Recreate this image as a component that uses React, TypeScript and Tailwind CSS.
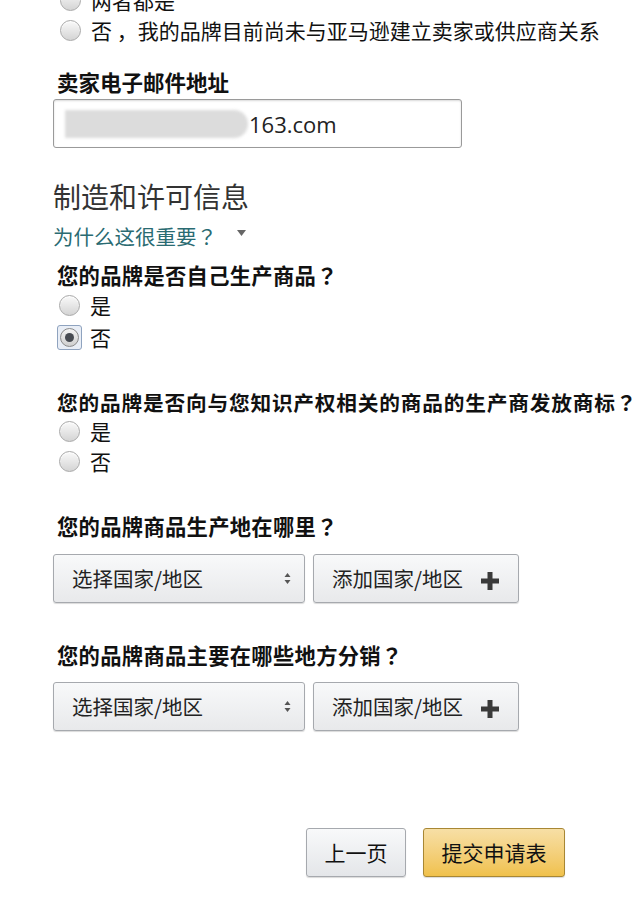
import React from "react";

const cjk = { fontFamily: '"Noto Sans CJK SC", "Noto Sans", sans-serif' };

// full-width question mark centred in its own cell, as in the reference
const Q = () => (
  <span className="inline-block w-[1em] text-center" style={{ fontFamily: '"Noto Sans CJK JP", sans-serif' }}>
    ？
  </span>
);

function Radio({ label, checked = false }: { label: string; checked?: boolean }) {
  return (
    <div className="flex items-center h-full">
      <div className="w-[26px] h-[26px] ml-[1px] flex items-center justify-center">
        {checked ? (
          <div className="w-[25px] h-[25px] rounded-[3px] border border-[#8fa3bf] bg-[#e9eef6] flex items-center justify-center">
            <div className="w-[19px] h-[19px] rounded-full border border-[#8b8b8b] bg-gradient-to-b from-[#f4f4f4] to-[#cfcfcf] flex items-center justify-center">
              <div className="w-[9px] h-[9px] rounded-full bg-[#474b52]" />
            </div>
          </div>
        ) : (
          <div className="w-[21px] h-[21px] rounded-full border border-[#a9a9a9] bg-gradient-to-b from-[#fafafa] to-[#d4d4d4] shadow-[inset_0_1px_1px_rgba(255,255,255,0.9)]" />
        )}
      </div>
      <span className="ml-[8px] text-[21px] leading-none text-[#111] whitespace-nowrap">{label}</span>
    </div>
  );
}

function CountryRow() {
  return (
    <div className="flex h-[49px] gap-[8px]">
      <div className="w-[252px] h-full rounded-[3px] border border-[#a6a9ae] bg-gradient-to-b from-[#f8f9fa] to-[#e8e9eb] shadow-[0_1px_1px_rgba(0,0,0,0.15)] flex items-center pl-[18px] pr-[12px]">
        <span className="text-[20.5px] text-[#222] leading-none">选择国家/地区</span>
        <svg className="ml-auto mr-[1px]" width="7" height="13" viewBox="0 0 7 13">
          <path d="M3.5 1 L6.5 5 L0.5 5 Z" fill="#555" />
          <path d="M3.5 12 L6.5 8 L0.5 8 Z" fill="#555" />
        </svg>
      </div>
      <div className="w-[206px] h-full rounded-[3px] border border-[#a6a9ae] bg-gradient-to-b from-[#f8f9fa] to-[#e8e9eb] shadow-[0_1px_1px_rgba(0,0,0,0.15)] flex items-center pl-[18px]">
        <span className="text-[20.5px] text-[#222] leading-none">添加国家/地区</span>
        <svg className="ml-[18px] mt-[4px]" width="18" height="18" viewBox="0 0 18 18">
          <rect x="6.5" y="0" width="5" height="18" fill="#3a3a3a" />
          <rect x="0" y="6.5" width="18" height="5" fill="#3a3a3a" />
        </svg>
      </div>
    </div>
  );
}

export default function App() {
  return (
    <div className="w-[640px] h-[919px] overflow-hidden bg-white" style={cjk}>
      <div className="flex flex-col pl-[53px]">
        {/* radio rows carried over from the previous question */}
        <div className="h-[30px] mt-[-15px] pl-[3px]">
          <Radio label="两者都是" />
        </div>
        <div className="h-[30px] pl-[3px]">
          <Radio label="否 ，我的品牌目前尚未与亚马逊建立卖家或供应商关系" />
        </div>

        <div className="mt-[22px] h-[30px] pl-[4px] flex items-center text-[21.5px] font-bold text-[#111] leading-none">
          卖家电子邮件地址
        </div>

        {/* email input */}
        <div className="mt-[2px] w-[409px] h-[49px] rounded-[3px] border border-[#9a9a9a] shadow-[inset_0_1px_2px_rgba(0,0,0,0.15)] flex items-center pl-[11px]">
          <div className="w-[183px] h-[28px] rounded-r-[14px] bg-[#dcdcdc] blur-[1.5px]" />
          <span className="ml-[1px] text-[22px] text-[#222] leading-none" style={{ fontFamily: '"Open Sans", sans-serif' }}>
            163.com
          </span>
        </div>

        <div className="mt-[30px] h-[36px] flex items-center text-[28px] text-[#333] leading-none">制造和许可信息</div>

        <div className="mt-[8px] h-[28px] flex items-center">
          <span className="text-[20.5px] text-[#2a6b72] leading-none">
            为什么这很重要<Q />
          </span>
          <svg className="ml-[20px] mb-[6px]" width="9" height="6" viewBox="0 0 9 6">
            <path d="M0 0 L9 0 L4.5 6 Z" fill="#666" />
          </svg>
        </div>

        <div className="mt-[11px] h-[28px] pl-[4px] flex items-center text-[21.3px] font-bold text-[#111] leading-none tracking-[0.3px]">
          您的品牌是否自己生产商品<Q />
        </div>
        <div className="h-[32px] pl-[2px]">
          <Radio label="是" />
        </div>
        <div className="h-[32px] pl-[2px]">
          <Radio label="否" checked />
        </div>

        <div className="mt-[35px] h-[28px] pl-[4px] flex items-center text-[20.7px] font-bold text-[#111] leading-none whitespace-nowrap tracking-[0.8px]">
          您的品牌是否向与您知识产权相关的商品的生产商发放商标<Q />
        </div>
        <div className="h-[30px] pl-[2px]">
          <Radio label="是" />
        </div>
        <div className="h-[30px] pl-[2px]">
          <Radio label="否" />
        </div>

        <div className="mt-[36px] h-[28px] pl-[4px] flex items-center text-[21.3px] font-bold text-[#111] leading-none tracking-[0.3px]">
          您的品牌商品生产地在哪里<Q />
        </div>
        <div className="mt-[14px]">
          <CountryRow />
        </div>

        <div className="mt-[38px] h-[28px] pl-[4px] flex items-center text-[21.3px] font-bold text-[#111] leading-none tracking-[0.3px]">
          您的品牌商品主要在哪些地方分销<Q />
        </div>
        <div className="mt-[13px]">
          <CountryRow />
        </div>
      </div>

      {/* footer buttons */}
      <div className="mt-[97px] flex justify-end pr-[75px] gap-[17px]">
        <div className="w-[100px] h-[49px] rounded-[3px] border border-[#a6a9ae] bg-gradient-to-b from-[#f8f9fa] to-[#e4e6e9] shadow-[0_1px_1px_rgba(0,0,0,0.15)] flex items-center justify-center text-[21px] text-[#111] leading-none">
          上一页
        </div>
        <div className="w-[142px] h-[49px] rounded-[3px] border border-[#a88734] bg-gradient-to-b from-[#f7dfa5] to-[#f0c14b] shadow-[0_1px_1px_rgba(0,0,0,0.15)] flex items-center justify-center text-[21px] text-[#111] leading-none">
          提交申请表
        </div>
      </div>
    </div>
  );
}
